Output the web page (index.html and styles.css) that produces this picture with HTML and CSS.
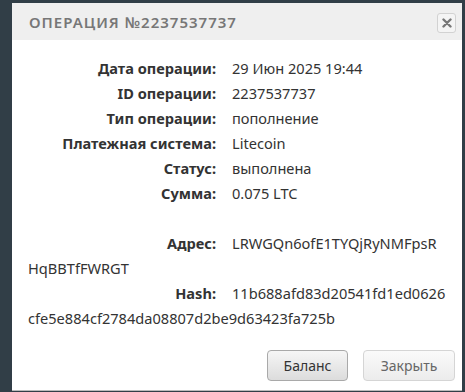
FILE: index.html
```html
<!DOCTYPE html>
<html lang="ru">
<head>
    <meta charset="UTF-8">
    <title>Операция</title>
    <link rel="stylesheet" href="styles.css">
</head>
<body>

<div class="dialog">
    <div class="dialog-head">
        <span class="dialog-title">Операция №2237537737</span>
        <button class="close-btn" type="button">
            <svg width="10" height="10" viewBox="0 0 10 10"><path d="M1.5 1.5 L8.5 8.5 M8.5 1.5 L1.5 8.5" stroke="#777" stroke-width="2.4" stroke-linecap="round"/></svg>
        </button>
    </div>
    <div class="dialog-body">
        <div class="row"><span class="lbl">Дата операции:</span><span class="val">29 Июн 2025 19:44</span></div>
        <div class="row"><span class="lbl">ID операции:</span><span class="val">2237537737</span></div>
        <div class="row"><span class="lbl">Тип операции:</span><span class="val">пополнение</span></div>
        <div class="row"><span class="lbl">Платежная система:</span><span class="val">Litecoin</span></div>
        <div class="row"><span class="lbl">Статус:</span><span class="val">выполнена</span></div>
        <div class="row"><span class="lbl">Сумма:</span><span class="val">0.075 LTC</span></div>
        <div class="row empty"></div>
        <div class="row"><span class="lbl">Адрес:</span><span class="val">LRWGQn6ofE1TYQjRyNMFpsR<br>HqBBTfFWRGT</span></div>
        <div class="row"><span class="lbl">Hash:</span><span class="val">11b688afd83d20541fd1ed0626<br>cfe5e884cf2784da08807d2be9d63423fa725b</span></div>
    </div>
    <div class="dialog-foot">
        <button class="btn btn-main" type="button">Баланс</button>
        <button class="btn btn-light" type="button">Закрыть</button>
    </div>
</div>

</body>
</html>
```

FILE: styles.css
```css
html, body {
    height: 100%;
}
body {
    margin: 0;
    background: #313e47;
    font-family: "Noto Sans", Arial, sans-serif;
    overflow: hidden;
}
.dialog {
    margin: 3px 3px 0 12px;
    height: 388px;
    background: #fff;
    border-bottom: 1px solid #bbb;
    box-sizing: border-box;
    display: flex;
    flex-direction: column;
}
.dialog-head {
    height: 37px;
    background: #efefef;
    display: flex;
    align-items: center;
    justify-content: space-between;
    padding: 0 6px 0 17px;
}
.dialog-title {
    text-transform: uppercase;
    color: #777;
    font-size: 15px;
    font-weight: 600;
    letter-spacing: 1px;
}
.close-btn {
    width: 19px;
    height: 20px;
    padding: 0;
    margin-top: 3px;
    border: 1px solid #d2d2d2;
    border-radius: 3px;
    background: #f4f4f4;
    display: flex;
    align-items: center;
    justify-content: center;
}
.dialog-body {
    flex: 1;
    padding: 16px 10px 0 16px;
    color: #333;
    font-size: 14.6px;
    line-height: 25px;
}
.row {
    white-space: nowrap;
}
.row.empty {
    height: 25px;
}
.lbl {
    display: inline-block;
    width: 188px;
    text-align: right;
    font-weight: bold;
    margin-right: 16px;
    color: #333;
}
.dialog-foot {
    display: flex;
    justify-content: flex-end;
    gap: 15px;
    padding: 0 7px 9px 0;
}
.btn {
    height: 31px;
    border-radius: 4px;
    font-family: "Noto Sans", Arial, sans-serif;
    font-size: 14px;
}
.btn-main {
    width: 81px;
    border: 1px solid #a9a9a9;
    background: linear-gradient(#f6f6f6, #dcdcdc);
    color: #333;
}
.btn-light {
    width: 92px;
    border: 1px solid #d5d5d5;
    background: linear-gradient(#fafafa, #ececec);
    color: #666;
}
```
